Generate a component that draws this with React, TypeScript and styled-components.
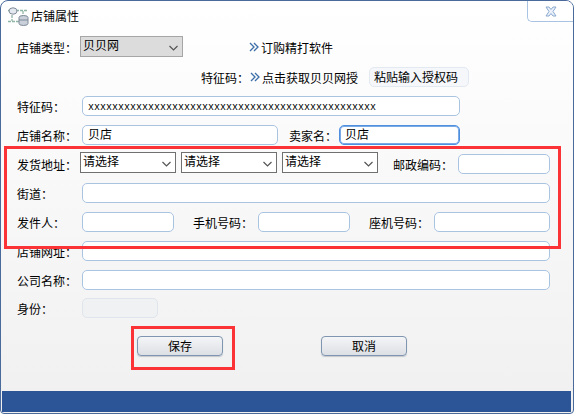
import React from "react"
import styled, { createGlobalStyle } from "styled-components"

const GlobalStyle = createGlobalStyle`
  html, body {
    margin: 0;
    padding: 0;
    background: #fff;
  }
  * {
    box-sizing: border-box;
  }
`

const Window = styled.div`
  position: relative;
  width: 574px;
  height: 414px;
  display: flex;
  flex-direction: column;
  border: 1px solid #4a6a9c;
  border-radius: 8px 8px 4px 4px;
  overflow: hidden;
  background: linear-gradient(#ffffff, #f0f0f0);
  font-family: "Noto Sans CJK SC", "Liberation Sans", sans-serif;
  font-size: 12px;
  color: #000;
`
const TitleBar = styled.div`
  height: 35px;
  display: flex;
  align-items: flex-start;
  gap: 2px;
  padding: 6px 0 0 6px;
  font-size: 12px;
  line-height: 18px;
`
const CloseTab = styled.div`
  position: absolute;
  top: 0;
  right: 0;
  width: 46px;
  height: 21px;
  display: flex;
  align-items: center;
  justify-content: center;
  border-left: 1px solid #a9c4e2;
  border-bottom: 1px solid #a9c4e2;
  border-radius: 0 0 0 5px;
  background: #fff;
`
const Form = styled.div`
  flex: 1;
  display: flex;
  flex-direction: column;
  gap: 9px;
  padding-left: 17px;
`
const Row = styled.div<{ $top?: number; $pad?: number }>`
  height: 20px;
  display: flex;
  align-items: center;
  margin-top: ${p => p.$top ?? 0}px;
  padding-top: ${p => p.$pad ?? 0}px;
`
const Label = styled.span<{ $width?: number; $left?: number }>`
  width: ${p => p.$width ?? 64}px;
  margin-left: ${p => p.$left ?? 0}px;
  flex: none;
  white-space: nowrap;
  line-height: 20px;
  position: relative;
  top: 1px;
  left: -1px;
`
const Input = styled.div<{ $width: number; $focus?: boolean; $disabled?: boolean }>`
  width: ${p => p.$width}px;
  height: 20px;
  flex: none;
  padding-left: 5px;
  line-height: 15px;
  white-space: nowrap;
  overflow: hidden;
  border-radius: 5px;
  border: 1px solid ${p => (p.$focus ? "#4f8fe0" : p.$disabled ? "#dfe5ec" : "#a9c4e0")};
  background: ${p => (p.$disabled ? "#f0f1f3" : "#fff")};
  box-shadow: ${p => (p.$focus ? "inset 0 0 0 1px #7aa9e6" : "none")};
`
const CodeText = styled.span`
  font-family: "Liberation Mono", monospace;
  font-size: 10px;
  line-height: 15px;
`
const SelectBox = styled.div<{ $width: number; $grey?: boolean; $shift: number }>`
  width: ${p => p.$width}px;
  height: 21px;
  flex: none;
  align-self: flex-start;
  display: flex;
  justify-content: space-between;
  padding: 0 4px 0 2px;
  margin-top: ${p => p.$shift}px;
  margin-right: 5px;
  line-height: 15px;
  border: 1px solid ${p => (p.$grey ? "#a6a6a6" : "#707070")};
  background: ${p => (p.$grey ? "#dcdcdc" : "#fff")};
`
const Chevron = styled.svg`
  width: 9px;
  height: 6px;
  margin-top: 8px;
  fill: none;
  stroke: #555;
  stroke-width: 1.2;
`
const LinkItem = styled.div<{ $left: number }>`
  margin-left: ${p => p.$left}px;
  display: flex;
  align-items: center;
  gap: 2px;
  white-space: nowrap;
`
const Arrows = styled.svg`
  width: 10px;
  height: 10px;
  fill: none;
  stroke: #3c6ea8;
  stroke-width: 1.3;
`
const PasteButton = styled.div`
  width: 100px;
  height: 20px;
  margin-left: 11px;
  padding-left: 4px;
  line-height: 18px;
  white-space: nowrap;
  border: 1px solid #e3e9f1;
  border-radius: 5px;
  background: #f5f7fa;
`
const ButtonRow = styled.div`
  display: flex;
  gap: 98px;
  margin: 9px 0 0 119px;
`
const ActionButton = styled.div`
  width: 86px;
  height: 20px;
  text-align: center;
  line-height: 18px;
  border: 1px solid #7f95b0;
  border-radius: 4px;
  background: linear-gradient(#f4f5f7, #dcdfe4);
  box-shadow: 0 1px 1px #c4c8ce;
`
const Footer = styled.div`
  height: 21px;
  flex: none;
  margin: 0 2px 1px 1px;
  background: #2b5596;
`
const RedMark = styled.div<{ $x: number; $y: number; $w: number; $h: number }>`
  position: absolute;
  left: ${p => p.$x}px;
  top: ${p => p.$y}px;
  width: ${p => p.$w}px;
  height: ${p => p.$h}px;
  border: 3px solid #fb3336;
  pointer-events: none;
`

function ArrowIcon() {
  return (
    <Arrows viewBox="0 0 10 10">
      <path d="M1 1l4 4-4 4M5 1l4 4-4 4" />
    </Arrows>
  )
}

function Select({ width, value, grey, shift }: { width: number; value: string; grey?: boolean; shift: number }) {
  return (
    <SelectBox $width={width} $grey={grey} $shift={shift}>
      {value}
      <Chevron viewBox="0 0 9 6">
        <path d="M0.5 1l4 4 4-4" />
      </Chevron>
    </SelectBox>
  )
}

export default function App() {
  return (
    <>
      <GlobalStyle />
      <Window>
        <TitleBar>
          <svg width="22" height="20" viewBox="0 0 22 20" fill="none">
            <path d="M1 3.500h19M1 14.500h11M5 4v10M16 4v9" stroke="#8fb5a5" strokeWidth="1.3" strokeDasharray="3 1" />
            <ellipse cx="6" cy="4" rx="4" ry="3.2" fill="#e4e9f0" stroke="#7f8a99" />
            <path d="M12 10.500a4.500 2 0 0 1 9 0v6a4.500 2 0 0 1-9 0z" fill="#c9d0da" stroke="#7f8a99" />
            <path d="M12 13h9" stroke="#7f8a99" />
          </svg>
          店铺属性
        </TitleBar>
        <CloseTab>
          <svg width="12" height="11" viewBox="0 0 12 11" fill="#eaf1f9" stroke="#8aa9cf">
            <path d="M1 1h3l2 2.500L8 1h3L8 5.500 11 10H8L6 7.500 4 10H1l3-4.500z" />
          </svg>
        </CloseTab>
        <Form>
          <Row $pad={2}>
            <Label $width={62}>店铺类型：</Label>
            <Select width={103} value="贝贝网" grey shift={-2} />
            <LinkItem $left={61}>
              <ArrowIcon />
              订购精打软件
            </LinkItem>
          </Row>
          <Row $top={2}>
            <Label $left={184} $width={48}>特征码：</Label>
            <LinkItem $left={0}>
              <ArrowIcon />
              点击获取贝贝网授
            </LinkItem>
            <PasteButton>粘贴输入授权码</PasteButton>
          </Row>
          <Row>
            <Label>特征码：</Label>
            <Input $width={378}>
              <CodeText>{"x".repeat(48)}</CodeText>
            </Input>
          </Row>
          <Row>
            <Label>店铺名称：</Label>
            <Input $width={196}>贝店</Input>
            <Label $left={12} $width={49}>卖家名：</Label>
            <Input $width={121} $focus>贝店</Input>
          </Row>
          <Row>
            <Label $width={62}>发货地址：</Label>
            <Select width={96} value="请选择" shift={-2} />
            <Select width={96} value="请选择" shift={-2} />
            <Select width={96} value="请选择" shift={-2} />
            <Label $left={11} $width={64}>邮政编码：</Label>
            <Input $width={92} />
          </Row>
          <Row>
            <Label>街道：</Label>
            <Input $width={468} />
          </Row>
          <Row>
            <Label>发件人：</Label>
            <Input $width={92} />
            <Label $left={20} $width={64}>手机号码：</Label>
            <Input $width={92} />
            <Label $left={20} $width={64}>座机号码：</Label>
            <Input $width={116} />
          </Row>
          <Row>
            <Label>店铺网址：</Label>
            <Input $width={468} />
          </Row>
          <Row>
            <Label>公司名称：</Label>
            <Input $width={468} />
          </Row>
          <Row $top={-1}>
            <Label>身份：</Label>
            <Input $width={76} $disabled />
          </Row>
          <ButtonRow>
            <ActionButton>保存</ActionButton>
            <ActionButton>取消</ActionButton>
          </ButtonRow>
        </Form>
        <Footer />
        <RedMark $x={3} $y={145} $w={557} $h={103} />
        <RedMark $x={130} $y={325} $w={104} $h={44} />
      </Window>
    </>
  )
}
